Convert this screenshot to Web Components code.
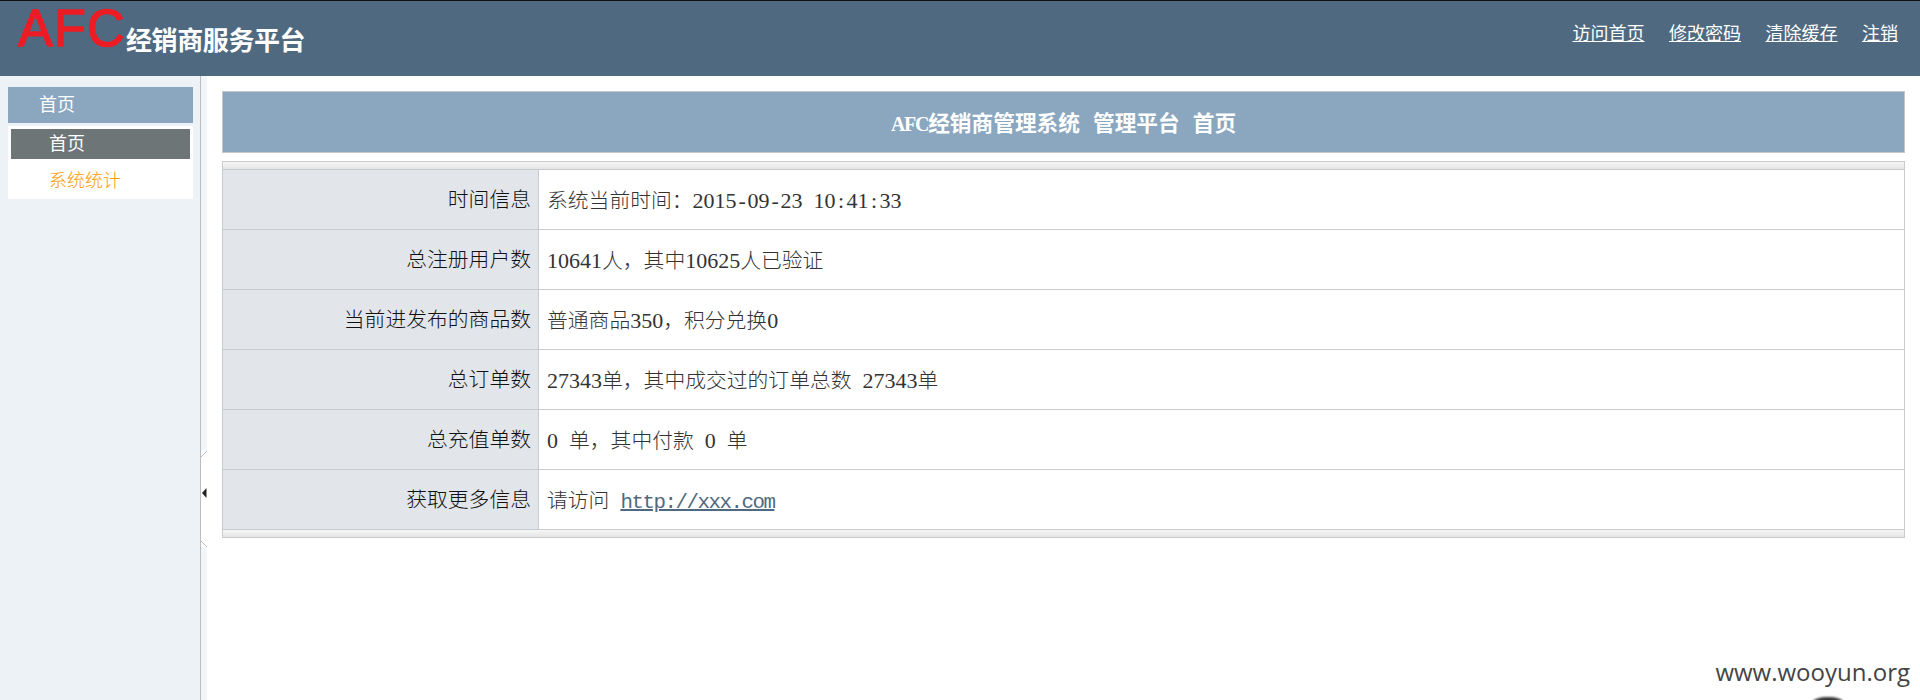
<!DOCTYPE html>
<html>
<head>
<meta charset="utf-8">
<style>
  html, body { margin: 0; height: 100%; overflow: hidden; background: #fff; }
  body { font-family: "Liberation Mono", "Noto Sans CJK SC", monospace; }
</style>
</head>
<body>
<afc-app></afc-app>
<script>
class AfcHeader extends HTMLElement {
  constructor() {
    super();
    this.attachShadow({ mode: "open" });
  }
  connectedCallback() {
    this.shadowRoot.innerHTML = `
      <style>
        :host {
          display: flex;
          justify-content: space-between;
          height: 75px;
          flex: none;
          background: #4f6a80;
          border-top: 1px solid #111;
        }
        .brand { display: flex; align-items: flex-start; padding: 1px 0 0 18px; }
        .afc {
          font: 52px/52px "Liberation Sans", sans-serif;
          color: #ed1c24;
          -webkit-text-stroke: 1.5px #ed1c24;
          letter-spacing: 1.3px;
          width: 108px;
        }
        .sub {
          font: bold 26px/30px "Noto Sans CJK SC", sans-serif;
          color: #fff;
          margin-top: 22px;
          letter-spacing: -0.4px;
        }
        nav { display: flex; gap: 24.5px; padding: 22px 22px 0 0; font-size: 18px; line-height: 24px; }
        a { color: #fff; }
      </style>
      <div class="brand"><span class="afc">AFC</span><span class="sub">经销商服务平台</span></div>
      <nav>
        <a href="#">访问首页</a><a href="#">修改密码</a><a href="#">清除缓存</a><a href="#">注销</a>
      </nav>`;
  }
}

class AfcSidebar extends HTMLElement {
  constructor() {
    super();
    this.attachShadow({ mode: "open" });
  }
  connectedCallback() {
    this.shadowRoot.innerHTML = `
      <style>
        :host {
          display: block;
          width: 200px;
          flex: none;
          box-sizing: border-box;
          background: #edf2f7;
          padding: 11px 7px 0 8px;
        }
        .title {
          height: 36px;
          line-height: 38px;
          background: #8aa7bf;
          color: #fff;
          font-size: 18px;
          padding-left: 31px;
        }
        .menu { margin-top: 3px; background: #fff; padding-top: 3px; }
        .item { font-size: 18px; padding-left: 38px; margin: 0 3px; height: 30px; line-height: 32px; }
        .active { background: #6e7576; color: #fff; }
        .link { color: #f90; height: 36px; line-height: 38px; margin-top: 4px; font-weight: 300; }
      </style>
      <div class="title">首页</div>
      <div class="menu">
        <div class="item active">首页</div>
        <div class="item link">系统统计</div>
      </div>`;
  }
}

// thin strip with the collapse arrow
class AfcToggle extends HTMLElement {
  constructor() {
    super();
    this.attachShadow({ mode: "open" });
  }
  connectedCallback() {
    this.shadowRoot.innerHTML = `
      <style>
        :host {
          display: flex;
          align-items: center;
          width: 6px;
          flex: none;
          border-left: 1px solid #b9bdc0;
          background: #f3f6f9;
        }
        svg { display: block; margin-top: 222px; }
      </style>
      <svg width="6" height="96" viewBox="0 0 6 96">
        <rect width="6" height="96" fill="#fff"/>
        <path d="M0 6L6 0M0 90L6 96" stroke="#b9bdc0" fill="none"/>
        <path d="M1 42L5.500 37V47Z" fill="#222"/>
      </svg>`;
  }
}

class AfcTitle extends HTMLElement {
  constructor() {
    super();
    this.attachShadow({ mode: "open" });
  }
  connectedCallback() {
    this.shadowRoot.innerHTML = `
      <style>
        :host {
          display: block;
          height: 60px;
          border: 1px solid #c4c8cb;
          background: #8aa7bf;
          color: #fff;
          font-size: 21.7px;
          font-weight: bold;
          line-height: 65px;
          text-align: center;
        }
      </style>
      <slot></slot>`;
  }
}

class AfcRow extends HTMLElement {
  constructor() {
    super();
    this.attachShadow({ mode: "open" });
  }
  connectedCallback() {
    this.shadowRoot.innerHTML = `
      <style>
        :host {
          display: grid;
          grid-template-columns: 316px 1fr;
          grid-template-rows: 59px;
          height: 60px;
          box-sizing: border-box;
          border-bottom: 1px solid #c8cbce;
          font-size: 20.8px;
          font-weight: 300;
          color: #333;
        }
        .label, .value { padding-top: 3px; line-height: 56px; }
        .label {
          background: #e2e6ea;
          border-right: 1px solid #c8cbce;
          text-align: right;
          padding: 5px 7px 0 0;
          line-height: 54px;
          color: #111;
        }
        .value { padding-left: 8px; white-space: nowrap; }
      </style>
      <div class="label">${this.getAttribute("label")}</div>
      <div class="value"><slot></slot></div>`;
  }
}

class AfcTable extends HTMLElement {
  constructor() {
    super();
    this.attachShadow({ mode: "open" });
  }
  connectedCallback() {
    this.shadowRoot.innerHTML = `
      <style>
        :host {
          display: block;
          margin-top: 8px;
          border: 1px solid #c8cbce;
        }
        .band { height: 7px; background: linear-gradient(#f7f7f7, #e4e4e4); }
        .band.top { border-bottom: 1px solid #c8cbce; }
      </style>
      <div class="band top"></div>
      <slot></slot>
      <div class="band"></div>`;
  }
}

class AfcApp extends HTMLElement {
  constructor() {
    super();
    this.attachShadow({ mode: "open" });
  }
  connectedCallback() {
    this.shadowRoot.innerHTML = `
      <style>
        :host { display: flex; flex-direction: column; height: 700px; position: relative; }
        .body { display: flex; flex: 1; }
        main { flex: 1; padding: 15px 15px 0 15px; min-width: 0; }
        /* digits: serif at 22px gives the 11px advance of the reference */
        .n { font-family: "Liberation Serif", serif; font-size: 22px; font-weight: 400; }
        .h { padding: 0 1.85px; }
        .c { padding: 0 2.45px; }
        .s { letter-spacing: 5.5px; }
        .afc { font-family: "Liberation Serif", serif; font-size: 20px; letter-spacing: -1.3px; }
        a {
          color: #4f6a80;
          font-weight: 400;
          letter-spacing: -1.48px;
          text-decoration-thickness: 2px;
        }
        .mark {
          position: absolute;
          right: 10px;
          top: 657px;
          font: 24px/30px "Open Sans", sans-serif;
          color: #444;
        }
        .dot {
          position: absolute;
          left: 1813px;
          top: 697px;
          width: 30px;
          height: 10px;
          border-radius: 50%;
          background: #333;
          filter: blur(1px);
        }
      </style>
      <afc-header></afc-header>
      <div class="body">
        <afc-sidebar></afc-sidebar>
        <afc-toggle></afc-toggle>
        <main>
          <afc-title><span class="afc">AFC</span>经销商管理系统 管理平台 首页</afc-title>
          <afc-table>
            <afc-row label="时间信息">系统当前时间：<span class="n">2015<span class="h">-</span>09<span class="h">-</span>23<span class="s"> </span>10<span class="c">:</span>41<span class="c">:</span>33</span></afc-row>
            <afc-row label="总注册用户数"><span class="n">10641</span>人，其中<span class="n">10625</span>人已验证</afc-row>
            <afc-row label="当前进发布的商品数">普通商品<span class="n">350</span>，积分兑换<span class="n">0</span></afc-row>
            <afc-row label="总订单数"><span class="n">27343</span>单，其中成交过的订单总数<span class="n s"> </span><span class="n">27343</span>单</afc-row>
            <afc-row label="总充值单数"><span class="n">0</span><span class="n s"> </span>单，其中付款<span class="n s"> </span><span class="n">0</span><span class="n s"> </span>单</afc-row>
            <afc-row label="获取更多信息">请访问<span class="n s"> </span><a href="#">http://xxx.com</a></afc-row>
          </afc-table>
        </main>
      </div>
      <span class="mark">www.wooyun.org</span>
      <div class="dot"></div>`;
  }
}

customElements.define("afc-header", AfcHeader);
customElements.define("afc-sidebar", AfcSidebar);
customElements.define("afc-toggle", AfcToggle);
customElements.define("afc-title", AfcTitle);
customElements.define("afc-row", AfcRow);
customElements.define("afc-table", AfcTable);
customElements.define("afc-app", AfcApp);
</script>
</body>
</html>
